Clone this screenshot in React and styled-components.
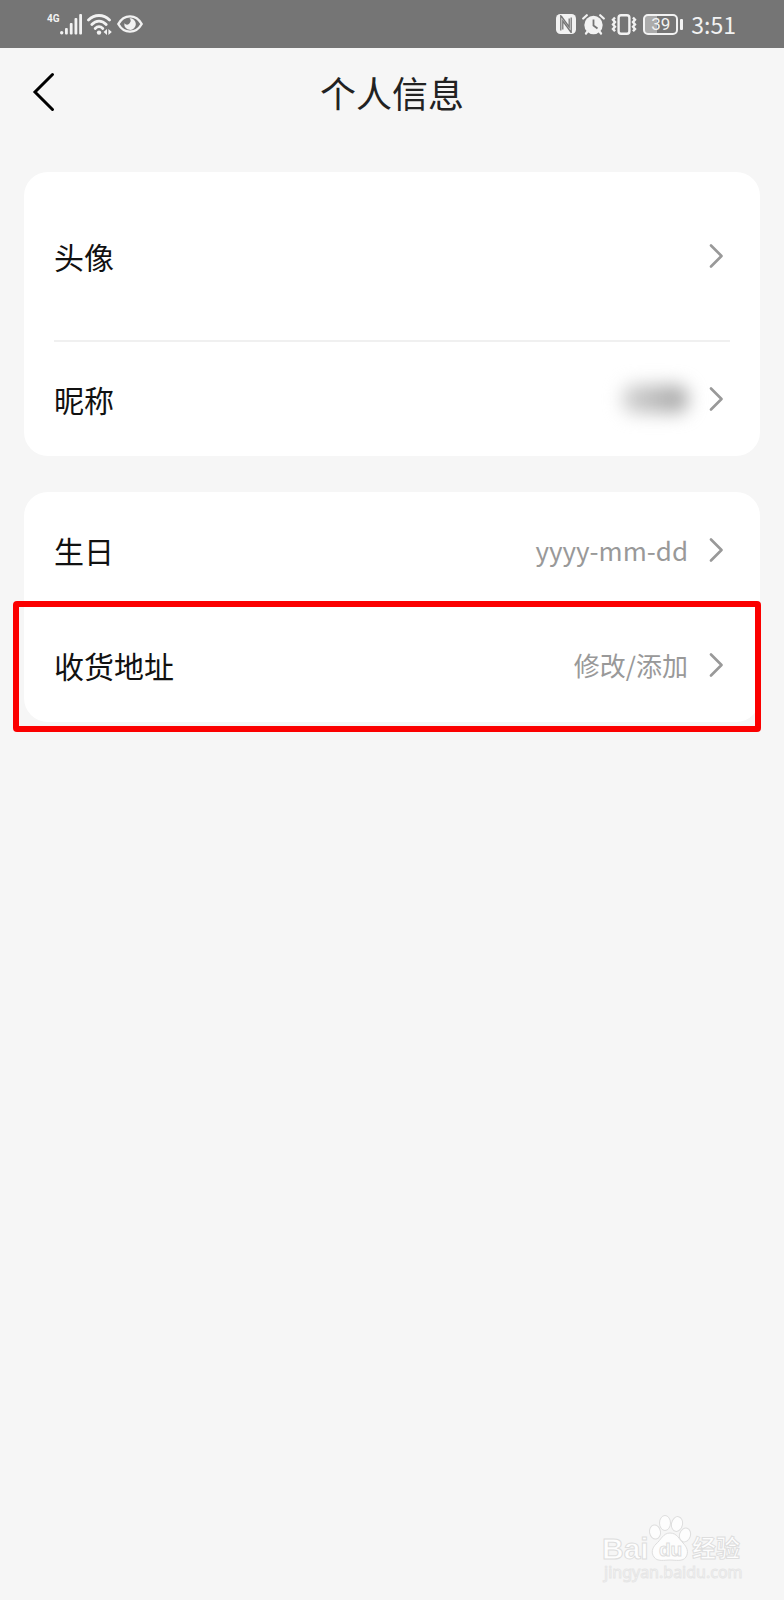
import React from 'react';
import styled, {createGlobalStyle} from 'styled-components';

const GlobalStyle = createGlobalStyle`
  * {
    box-sizing: border-box;
  }
  body {
    margin: 0;
    background-color: #f6f6f6;
    font-family: 'Noto Sans', 'Noto Sans CJK SC', sans-serif;
  }
`;

const Page = styled.div`
  position: relative;
  display: flex;
  flex-direction: column;
  min-height: 100vh;
`;
const StatusBar = styled.div`
  display: flex;
  align-items: center;
  justify-content: space-between;
  height: 48px;
  padding: 0 48px 0 47px;
  background-color: #757575;
  color: #f2f2f2;
`;
const StatusGroup = styled.div`
  display: flex;
  align-items: center;
  gap: ${props => props.$gap}px;
`;
const Network = styled.span`
  align-self: flex-start;
  font-family: 'Roboto', sans-serif;
  font-size: 10px;
  font-weight: bold;
  line-height: 10px;
`;
const Battery = styled.div`
  display: flex;
  align-items: center;
  gap: 2px;
`;
const BatteryBody = styled.div`
  width: 35px;
  height: 21px;
  border: 2px solid #f2f2f2;
  border-radius: 5px;
  background: linear-gradient(to right, #ababab 39%, transparent 39%);
  font-family: 'Roboto', sans-serif;
  font-size: 17px;
  line-height: 17px;
  text-align: center;
`;
const BatteryCap = styled.div`
  width: 3px;
  height: 11px;
  border-radius: 1px;
  background-color: #f2f2f2;
`;
const Time = styled.span`
  margin-left: 2px;
  font-family: 'Noto Sans CJK SC', sans-serif;
  font-size: 23px;
  line-height: 32px;
`;

const Header = styled.header`
  display: grid;
  grid-template-columns: 64px 1fr 64px;
  align-items: center;
  height: 88px;
`;
const BackButton = styled.button`
  display: flex;
  justify-content: flex-end;
  padding: 0 8px;
  border: none;
  background: none;
  cursor: pointer;
`;
const Title = styled.h1`
  margin: 0;
  color: #222;
  font-family: 'Noto Sans CJK SC', sans-serif;
  font-size: 36px;
  font-weight: 400;
  line-height: 48px;
  text-align: center;
`;

const Main = styled.main`
  display: flex;
  flex-direction: column;
  gap: 36px;
  padding: 36px 24px;
`;
const Card = styled.section`
  border-radius: 24px;
  background-color: white;
`;
const Divider = styled.hr`
  height: 2px;
  margin: 0 30px;
  border: none;
  background-color: #f0f0f0;
`;
const RowButton = styled.button`
  position: relative;
  display: flex;
  align-items: center;
  width: 100%;
  height: ${props => props.$height}px;
  padding: 0 36px 0 30px;
  border: none;
  background: none;
  font-family: 'Noto Sans CJK SC', sans-serif;
  line-height: 40px;
  cursor: pointer;
`;
const Label = styled.span`
  flex: 1;
  color: #111;
  font-size: 30px;
  text-align: left;
`;
const Value = styled.span`
  margin-right: 20px;
  color: #999;
  font-size: 26px;
`;
const HiddenName = styled.span`
  width: 66px;
  height: 28px;
  margin-right: 20px;
  border-radius: 12px;
  background: linear-gradient(to right, #d4d4d4, #a4a4a4);
  filter: blur(9px);
`;
const Highlight = styled.span`
  position: absolute;
  top: -7px;
  right: -1px;
  bottom: -10px;
  left: -11px;
  border: 6px solid #fb0000;
  border-radius: 4px;
  pointer-events: none;
`;

const Watermark = styled.a`
  position: absolute;
  right: 38px;
  bottom: 14px;
  text-decoration: none;
`;

const Signal = () => (
  <svg width="22" height="21" viewBox="0 0 22 21" fill="currentColor">
    <circle cx="1.7" cy="18.8" r="1.7" />
    <rect x="5" y="14" width="2.8" height="6.5" rx="1" />
    <rect x="9.8" y="9" width="2.8" height="11.5" rx="1" />
    <rect x="14.5" y="4" width="2.8" height="16.5" rx="1" />
    <rect x="19.2" y="0" width="2.8" height="20.5" rx="1" />
  </svg>
);

const Wifi = () => (
  <svg width="25" height="21" viewBox="0 0 25 21" fill="none">
    <g stroke="currentColor" strokeWidth="2.8" strokeLinecap="round">
      <path d="M1.5 6C7.5 0 16.5 0 22.5 6" />
      <path d="M4.8 10.5C9 6 15 6 19.2 10.5" />
      <path d="M8.2 14.5C10.6 12 13.4 12 15.8 14.5" />
    </g>
    <circle cx="12" cy="18.6" r="2.2" fill="currentColor" />
    <path d="M20 15v6l-3.4-3zM21.4 15v6l3.4-3z" fill="currentColor" />
  </svg>
);

const Eye = () => (
  <svg width="26" height="18" viewBox="0 0 26 18" fill="none">
    <path
      d="M1.3 9C7 -1.2 19 -1.2 24.7 9C19 19.2 7 19.2 1.3 9Z"
      stroke="currentColor"
      strokeWidth="2.4"
      strokeLinejoin="round"
    />
    <path
      d="M12.5 3.3A5.8 5.8 0 1 1 7.3 8.3A3.3 3.3 0 1 0 12.5 3.3Z"
      fill="currentColor"
    />
  </svg>
);

const Nfc = () => (
  <svg width="20" height="20" viewBox="0 0 20 20" fill="none">
    <rect width="20" height="20" rx="4.5" fill="currentColor" />
    <path
      d="M4.8 1V16.5M4.8 1.5L13.2 13V4.5M6.8 15.5V7L15.2 18.5M15.2 3.5V19"
      stroke="#757575"
      strokeWidth="1.3"
    />
  </svg>
);

const Alarm = () => (
  <svg width="23" height="21" viewBox="0 0 23 21" fill="none">
    <circle cx="11.5" cy="11" r="9.2" fill="currentColor" />
    <path
      d="M1.2 4.5L4.8 1.2M21.8 4.5L18.2 1.2M5.5 17.5L4 19.5M17.5 17.5L19 19.5"
      stroke="currentColor"
      strokeWidth="2.2"
      strokeLinecap="round"
    />
    <path d="M11.5 5.5V11.5L15.5 14.5" stroke="#757575" strokeWidth="1.8" />
  </svg>
);

const Vibrate = () => (
  <svg width="26" height="21" viewBox="0 0 26 21" fill="none">
    <rect
      x="7.6"
      y="1.2"
      width="10.8"
      height="18.6"
      rx="2.5"
      stroke="currentColor"
      strokeWidth="2.4"
    />
    <path
      d="M4 3.5L2 5.7L4 8L2 10.4L4 12.8L2 15L4 17.3M22 3.5L24 5.7L22 8L24 10.4L22 12.8L24 15L22 17.3"
      stroke="currentColor"
      strokeWidth="2.4"
    />
  </svg>
);

const Chevron = () => (
  <svg width="16" height="24" viewBox="0 0 16 24" fill="none">
    <path
      d="M3 1.5L13.5 12L3 22.5"
      stroke="#999"
      strokeWidth="2.6"
      strokeLinecap="round"
      strokeLinejoin="round"
    />
  </svg>
);

const LogoSvg = styled.svg`
  display: block;
  fill: #fdfdfd;
  stroke: #dedede;
  stroke-width: 1px;
`;
const LogoText = styled.text`
  font-family: 'Liberation Sans', 'Noto Sans CJK SC', sans-serif;
  font-size: ${props => props.$size}px;
  font-weight: bold;
`;
const SiteText = styled.text`
  stroke: #e6e6e6;
  font-family: 'Noto Sans', sans-serif;
  font-size: 16px;
`;

const BaiduLogo = () => (
  <LogoSvg width="144" height="72" viewBox="0 0 144 72">
    <LogoText x="0" y="45" $size={30}>
      Bai
    </LogoText>
    <ellipse cx="53" cy="18" rx="5.5" ry="7" transform="rotate(-10 53 18)" />
    <ellipse cx="63" cy="9" rx="5.5" ry="7.5" />
    <ellipse cx="75" cy="10" rx="5.5" ry="7.5" transform="rotate(12 75 10)" />
    <ellipse cx="83" cy="21" rx="5.5" ry="7" transform="rotate(18 83 21)" />
    <path d="M68 19C61 19 59 26 54 30C50 34 49 39 52 43C55 48 63 46 68 46C73 46 81 48 84 43C87 38 85 33 81 29C77 25 75 19 68 19Z" />
    <LogoText x="57" y="42" $size={19}>
      du
    </LogoText>
    <LogoText x="90" y="43" $size={24}>
      经验
    </LogoText>
    <SiteText x="2" y="64">
      jingyan.baidu.com
    </SiteText>
  </LogoSvg>
);

function Row({label, height = 116, highlight, children}) {
  return (
    <RowButton type="button" $height={height}>
      <Label>{label}</Label>
      {children}
      <Chevron />
      {highlight && <Highlight />}
    </RowButton>
  );
}

function App() {
  return (
    <>
      <GlobalStyle />
      <Page>
        <StatusBar>
          <StatusGroup $gap={5}>
            <StatusGroup $gap={0}>
              <Network>4G</Network>
              <Signal />
            </StatusGroup>
            <Wifi />
            <Eye />
          </StatusGroup>
          <StatusGroup $gap={6}>
            <Nfc />
            <Alarm />
            <Vibrate />
            <Battery>
              <BatteryBody>39</BatteryBody>
              <BatteryCap />
            </Battery>
            <Time>3:51</Time>
          </StatusGroup>
        </StatusBar>
        <Header>
          <BackButton type="button" aria-label="返回">
            <svg width="24" height="40" viewBox="0 0 24 40" fill="none">
              <path
                d="M20.5 2.5L3 20L20.5 37.5"
                stroke="black"
                strokeWidth="3"
                strokeLinecap="round"
              />
            </svg>
          </BackButton>
          <Title>个人信息</Title>
        </Header>
        <Main>
          <Card>
            <Row label="头像" height={168} />
            <Divider />
            <Row label="昵称" height={114}>
              <HiddenName />
            </Row>
          </Card>
          <Card>
            <Row label="生日">
              <Value>yyyy-mm-dd</Value>
            </Row>
            <Row label="收货地址" height={114} highlight>
              <Value>修改/添加</Value>
            </Row>
          </Card>
        </Main>
        <Watermark href="#">
          <BaiduLogo />
        </Watermark>
      </Page>
    </>
  );
}
export default App;
